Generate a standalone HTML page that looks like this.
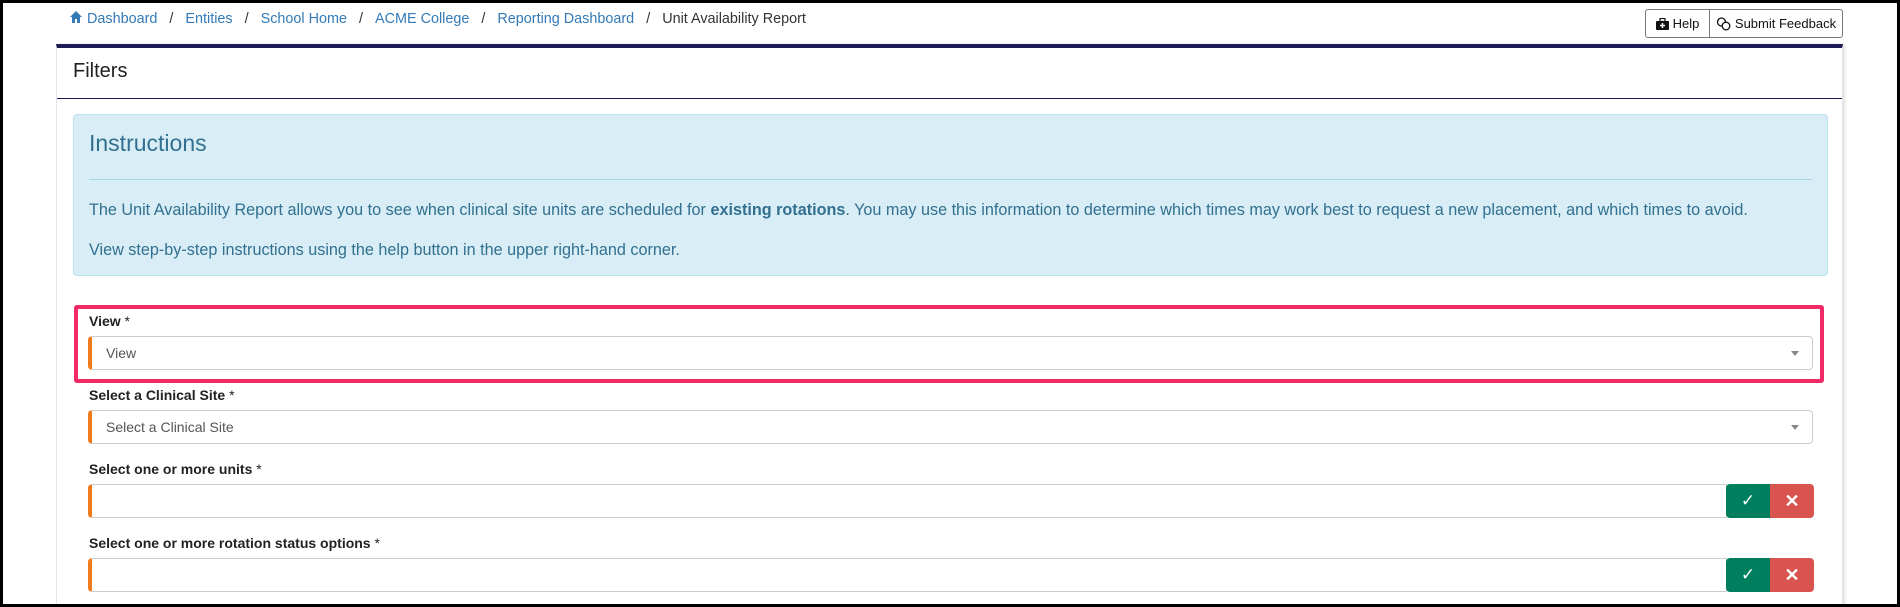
<!DOCTYPE html>
<html><head><meta charset="utf-8"><style>
*{box-sizing:border-box;margin:0;padding:0}
html,body{width:1900px;height:607px;overflow:hidden}
body{background:#fff;font-family:"Liberation Sans",Arial,sans-serif;position:relative}
.a{position:absolute}
.frame{left:0;top:0;width:1900px;height:607px;border:3px solid #000;z-index:10;pointer-events:none}
.bc{top:9px;left:69px;font-size:14.4px;color:#337ab7;white-space:nowrap;line-height:20px}
.bc span.s{color:#333;margin:0 12px}
.bc .cur{color:#333}
.btns{top:9px;left:1645px;width:198px;height:29px;border:1px solid #777;border-radius:3px;font-size:13px;color:#111;display:flex}
.btns div{display:flex;align-items:center;justify-content:center;height:100%}
.card{left:56px;top:44px;width:1787px;height:570px;border:1px solid #e3e3e3;border-top:4px solid #1b1b55;box-shadow:2px 0 3px rgba(0,0,0,.12)}
.hdr{position:absolute;left:0;top:0;width:100%;height:51px;border-bottom:1px solid #1b1b55}
.hdr h2{position:absolute;left:16px;top:12px;font-size:20px;font-weight:normal;color:#222}
.inst{left:73px;top:114px;width:1755px;height:162px;background:#d9edf6;border:1px solid #bce3ee;border-radius:4px;color:#31708f}
.inst h3{position:absolute;left:15px;top:15px;font-size:23px;font-weight:normal}
.inst .hr{position:absolute;left:15px;right:15px;top:64px;height:1px;background:#a9d7e6}
.inst p{position:absolute;left:15px;font-size:16.2px;white-space:nowrap}
.pink{left:74px;top:305px;width:1750px;height:78px;border:4px solid #ef2a64;border-radius:3px}
.lbl{left:89px;font-size:14px;font-weight:bold;color:#222}
.lbl i{font-style:normal;font-weight:normal}
.sel{left:88px;width:1725px;height:34px;border:1px solid #ccc;border-left:4px solid #f07c1e;border-radius:4px;font-size:14px;color:#555;padding:8px 0 0 14px}
.sel:after{content:"";position:absolute;right:13px;top:14px;border:4px solid transparent;border-top:5px solid #888}
.inp{left:88px;width:1639px;height:34px;border:1px solid #ccc;border-left:4px solid #f07c1e;border-radius:4px 0 0 4px}
.g{left:1726px;width:44px;height:34px;background:#007f5f;border-radius:4px 0 0 4px;color:#fff;text-align:center;font-size:17px;line-height:34px}
.r{left:1770px;width:44px;height:34px;background:#d9534f;border-radius:0 4px 4px 0;color:#fff;text-align:center;font-size:18px;line-height:34px;font-weight:bold}
</style></head><body>
<div class="a frame"></div>
<div class="a bc"><svg width="14" height="14" viewBox="0 0 14 14" style="vertical-align:-1px;margin-right:4px"><path d="M7 1L1 7h2v6h3V9h2v4h3V7h2z" fill="#337ab7"/></svg>Dashboard<span class="s">/</span>Entities<span class="s">/</span>School Home<span class="s">/</span>ACME College<span class="s">/</span>Reporting Dashboard<span class="s">/</span><span class="cur">Unit Availability Report</span></div>
<div class="a btns"><div style="width:64px;border-right:1px solid #777"><svg width="13" height="12" viewBox="0 0 13 12" style="margin-right:4px"><rect x="0" y="3" width="13" height="9" rx="1" fill="#111"/><rect x="4" y="0.5" width="5" height="3" fill="none" stroke="#111" stroke-width="1.2"/><path d="M6.5 5v5M4 7.5h5" stroke="#fff" stroke-width="1.5"/></svg>Help</div><div style="flex:1"><svg width="15" height="14" viewBox="0 0 15 14" style="margin-right:4px"><circle cx="5.5" cy="5" r="4" fill="none" stroke="#111" stroke-width="1.3"/><circle cx="10" cy="9" r="3.8" fill="#fff" stroke="#111" stroke-width="1.3"/></svg>Submit Feedback</div></div>
<div class="a card"><div class="hdr"><h2>Filters</h2></div></div>
<div class="a inst"><h3>Instructions</h3><div class="hr"></div>
<p style="top:86px">The Unit Availability Report allows you to see when clinical site units are scheduled for <b>existing rotations</b>. You may use this information to determine which times may work best to request a new placement, and which times to avoid.</p>
<p style="top:126px">View step-by-step instructions using the help button in the upper right-hand corner.</p></div>
<div class="a pink"></div>
<div class="a lbl" style="top:313px">View <i>*</i></div>
<div class="a sel" style="top:336px">View</div>
<div class="a lbl" style="top:387px">Select a Clinical Site <i>*</i></div>
<div class="a sel" style="top:410px">Select a Clinical Site</div>
<div class="a lbl" style="top:461px">Select one or more units <i>*</i></div>
<div class="a inp" style="top:484px"></div><div class="a g" style="top:484px">✓</div><div class="a r" style="top:484px">✕</div>
<div class="a lbl" style="top:535px">Select one or more rotation status options <i>*</i></div>
<div class="a inp" style="top:558px"></div><div class="a g" style="top:558px">✓</div><div class="a r" style="top:558px">✕</div>
</body></html>
